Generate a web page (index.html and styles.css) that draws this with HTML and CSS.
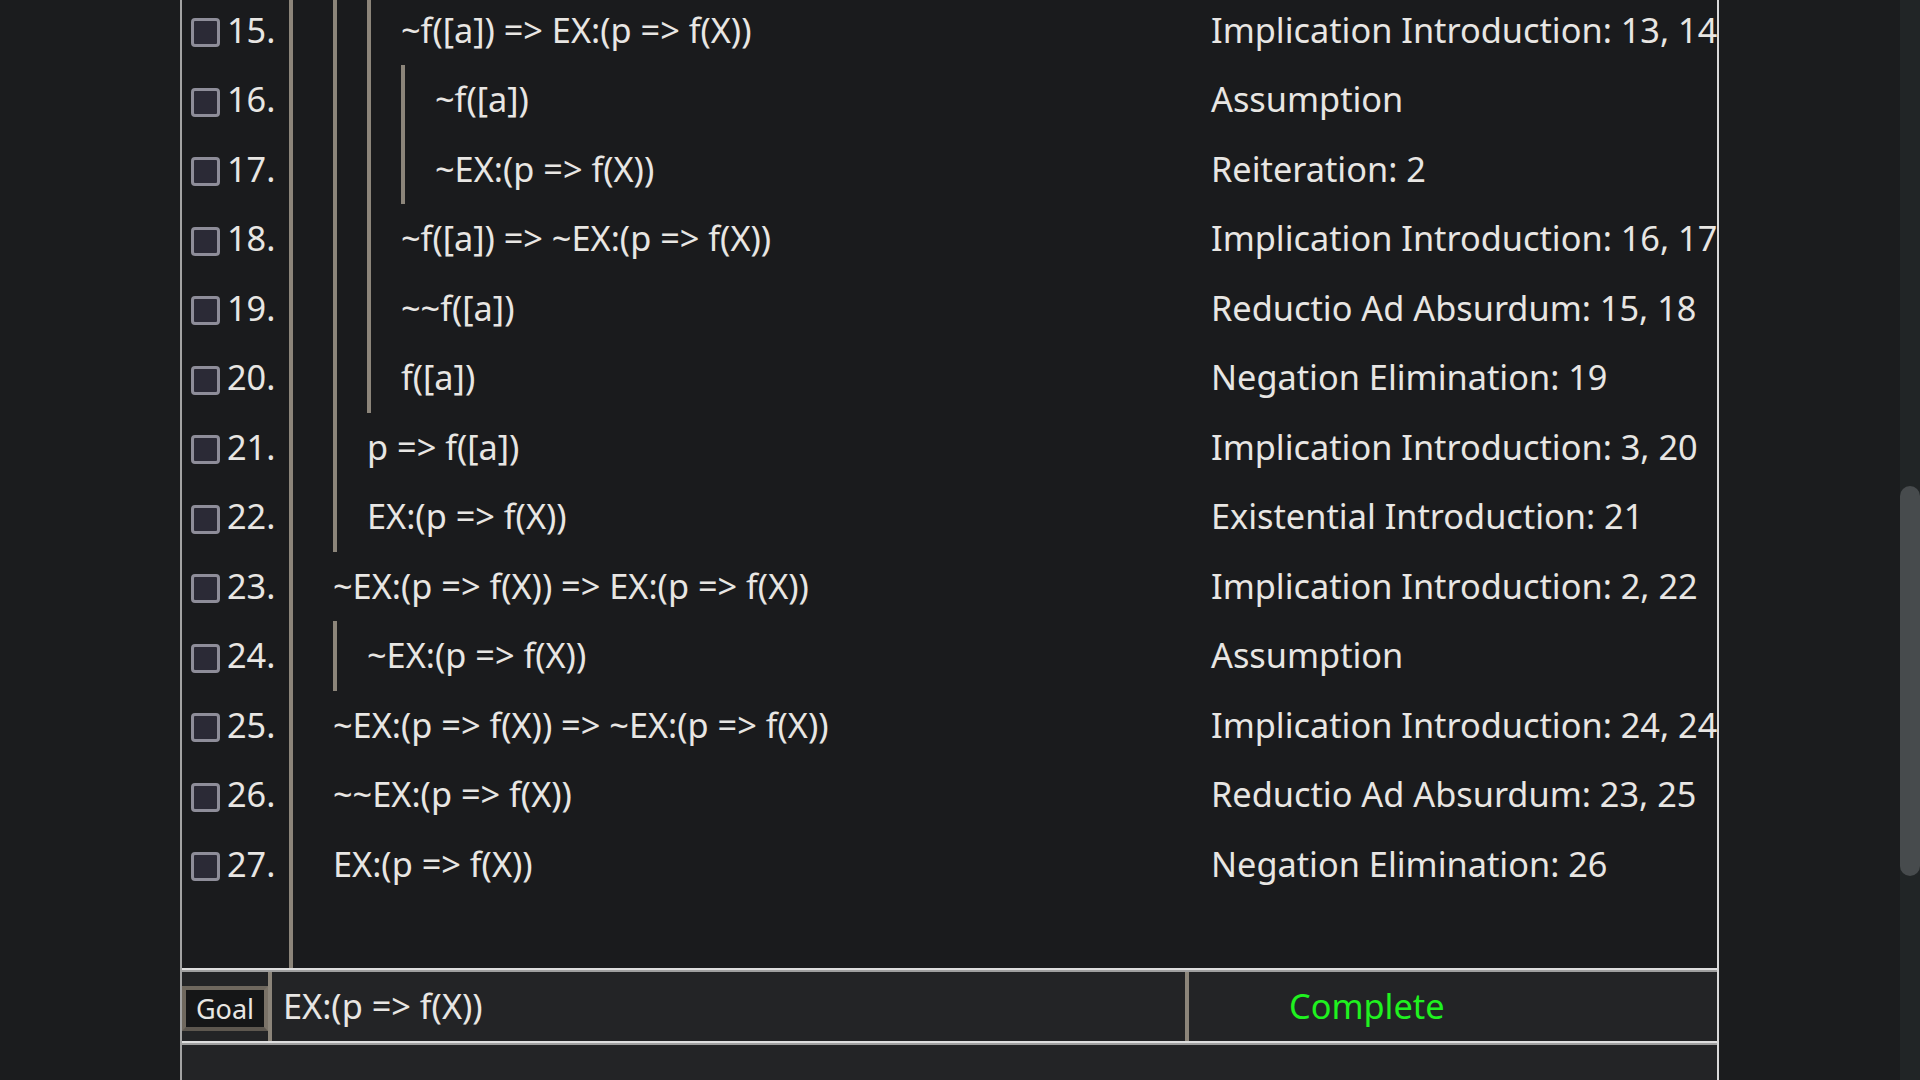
FILE: index.html
```html
<!DOCTYPE html>
<html lang="en">
<head>
<meta charset="utf-8">
<title>Proof</title>
<link rel="stylesheet" href="styles.css">
</head>
<body>
<div class="main">
  <div class="panel">
    <div class="proof">
      <div class="proof-body">
        <div class="row"><div class="num"><span class="cb"></span>15.</div><div class="formula"><span class="bar"></span><span class="bar"></span><span class="f">~f([a]) =&gt; EX:(p =&gt; f(X))</span></div><div class="reason">Implication Introduction: 13, 14</div></div>
        <div class="row"><div class="num"><span class="cb"></span>16.</div><div class="formula"><span class="bar"></span><span class="bar"></span><span class="bar"></span><span class="f">~f([a])</span></div><div class="reason">Assumption</div></div>
        <div class="row"><div class="num"><span class="cb"></span>17.</div><div class="formula"><span class="bar"></span><span class="bar"></span><span class="bar"></span><span class="f">~EX:(p =&gt; f(X))</span></div><div class="reason">Reiteration: 2</div></div>
        <div class="row"><div class="num"><span class="cb"></span>18.</div><div class="formula"><span class="bar"></span><span class="bar"></span><span class="f">~f([a]) =&gt; ~EX:(p =&gt; f(X))</span></div><div class="reason">Implication Introduction: 16, 17</div></div>
        <div class="row"><div class="num"><span class="cb"></span>19.</div><div class="formula"><span class="bar"></span><span class="bar"></span><span class="f">~~f([a])</span></div><div class="reason">Reductio Ad Absurdum: 15, 18</div></div>
        <div class="row"><div class="num"><span class="cb"></span>20.</div><div class="formula"><span class="bar"></span><span class="bar"></span><span class="f">f([a])</span></div><div class="reason">Negation Elimination: 19</div></div>
        <div class="row"><div class="num"><span class="cb"></span>21.</div><div class="formula"><span class="bar"></span><span class="f">p =&gt; f([a])</span></div><div class="reason">Implication Introduction: 3, 20</div></div>
        <div class="row"><div class="num"><span class="cb"></span>22.</div><div class="formula"><span class="bar"></span><span class="f">EX:(p =&gt; f(X))</span></div><div class="reason">Existential Introduction: 21</div></div>
        <div class="row"><div class="num"><span class="cb"></span>23.</div><div class="formula"><span class="f">~EX:(p =&gt; f(X)) =&gt; EX:(p =&gt; f(X))</span></div><div class="reason">Implication Introduction: 2, 22</div></div>
        <div class="row"><div class="num"><span class="cb"></span>24.</div><div class="formula"><span class="bar"></span><span class="f">~EX:(p =&gt; f(X))</span></div><div class="reason">Assumption</div></div>
        <div class="row"><div class="num"><span class="cb"></span>25.</div><div class="formula"><span class="f">~EX:(p =&gt; f(X)) =&gt; ~EX:(p =&gt; f(X))</span></div><div class="reason">Implication Introduction: 24, 24</div></div>
        <div class="row"><div class="num"><span class="cb"></span>26.</div><div class="formula"><span class="f">~~EX:(p =&gt; f(X))</span></div><div class="reason">Reductio Ad Absurdum: 23, 25</div></div>
        <div class="row"><div class="num"><span class="cb"></span>27.</div><div class="formula"><span class="f">EX:(p =&gt; f(X))</span></div><div class="reason">Negation Elimination: 26</div></div>
        <div class="row filler"><div class="num"></div></div>
      </div>
    </div>
    <div class="rule"></div>
    <div class="goalbar">
      <div class="goal-label"><div class="goal-box">Goal</div></div>
      <div class="goal-formula">EX:(p =&gt; f(X))</div>
      <div class="goal-status">Complete</div>
    </div>
    <div class="rule"></div>
    <div class="below"></div>
  </div>
</div>
<div class="scrollbar"><div class="thumb"></div></div>
</body>
</html>
```

FILE: styles.css
```css
html, body {
  margin: 0;
  padding: 0;
}

body {
  width: 1920px;
  height: 1080px;
  overflow: hidden;
  display: flex;
  background: #1b1c1e;
  color: #e8e6e3;
  font-family: "Noto Sans", "Open Sans", sans-serif;
  font-size: 34.3px;
}

.main {
  flex: 1;
  padding-left: 180px;
  display: flex;
}

.panel {
  width: 1539px;
  box-sizing: border-box;
  height: 1080px;
  border-left: 2px solid #a3a3a3;
  border-right: 2px solid #d9d9d9;
  background: #1a1b1d;
  display: flex;
  flex-direction: column;
  overflow: hidden;
}

.proof {
  height: 968px;
  flex: none;
  overflow: hidden;
}

.proof-body {
  margin-top: -4.5px;
  height: 972.5px;
  display: flex;
  flex-direction: column;
}

.row {
  height: 69.5px;
  flex: none;
  display: grid;
  grid-template-columns: 111px 918px 506px;
  white-space: nowrap;
  line-height: 67.7px;
}

.row.filler {
  flex: 1;
  height: auto;
}

.num {
  box-sizing: border-box;
  border-right: 4px solid #8c857a;
  display: flex;
  align-items: flex-start;
  padding-left: 9px;
}

.cb {
  width: 29px;
  height: 29px;
  box-sizing: border-box;
  border: 3px solid #8e8d99;
  border-radius: 4px;
  background: #2b2a36;
  margin-top: 22.5px;
  margin-right: 7px;
  flex: none;
}

.formula {
  display: flex;
  padding-left: 40px;
}

.bar {
  width: 34px;
  flex: none;
  box-sizing: border-box;
  border-left: 4px solid #8c857a;
}

.reason {
  overflow: visible;
}

.rule {
  height: 4px;
  flex: none;
  background: linear-gradient(to bottom, #dedede 0 2px, #9f9f9f 2px 4px);
}

.goalbar {
  height: 69px;
  flex: none;
  background: #232426;
  display: grid;
  grid-template-columns: 90px 917px 528px;
}

.goal-label {
  box-sizing: border-box;
  border-right: 4px solid #8c857a;
  padding-top: 14px;
}

.goal-box {
  height: 45px;
  box-sizing: border-box;
  border: 4px solid;
  border-color: #6f685e #7b7368 #5d574f #6f685e;
  background: #151617;
  font-size: 27px;
  line-height: 37px;
  text-align: center;
}

.goal-formula {
  box-sizing: border-box;
  border-right: 4px solid #8c857a;
  padding-left: 11px;
  line-height: 67.4px;
  white-space: nowrap;
}

.goal-status {
  padding-left: 100px;
  line-height: 67.4px;
  color: #1ff21f;
  white-space: nowrap;
}

.below {
  flex: 1;
  background: #232426;
}

.scrollbar {
  width: 20px;
  flex: none;
  background: #212526;
}

.thumb {
  margin-top: 486px;
  height: 390px;
  border-radius: 10px;
  background: #474b4d;
}
```
